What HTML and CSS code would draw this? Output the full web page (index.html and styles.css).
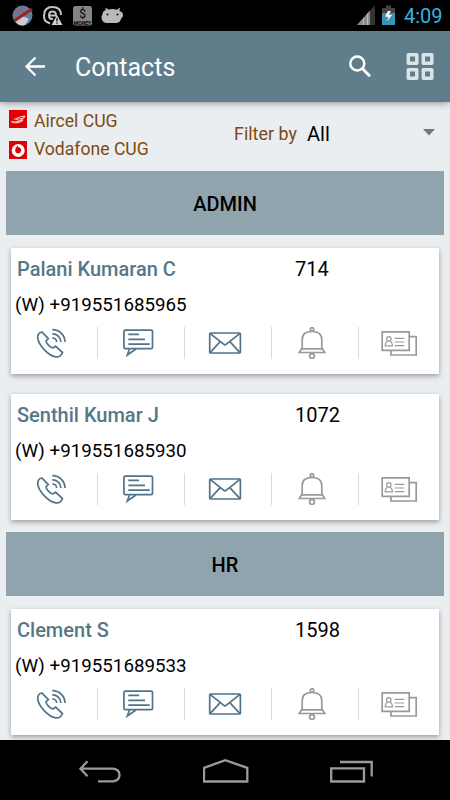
FILE: index.html
```html
<!DOCTYPE html>
<html lang="en">
<head>
  <meta charset="UTF-8">
  <meta name="viewport" content="width=device-width, initial-scale=1.0">
  <title>Contacts</title>
  <link rel="stylesheet" href="styles.css">
</head>
<body>
  <!-- Shared icons -->
  <svg class="icon-defs">
    <symbol id="call" viewBox="0 0 48 32">
      <path d="M14.8 5C12.500 5.500 10.600 7.500 10.700 10.500C11.200 18 21.500 29 28.800 29.900C32 30.200 34.500 28.300 35.500 25.500L28.600 19.200L26.100 21C23.600 20.900 19 16.600 19 13.800L21.300 11.600Z"/>
      <path d="M25.300 2.700A12.500 12.500 0 0 1 38 15M25.300 6.900A8.300 8.300 0 0 1 33.900 15M25.300 11A4.400 4.400 0 0 1 29.700 15"/>
    </symbol>
    <symbol id="message" viewBox="0 0 48 32">
      <rect x="9.900" y="3.100" width="28.600" height="18.600" rx="1.500"/>
      <path d="M15.500 22L13.300 28L22 22M14.300 7.400H25M14.300 12.400H31M14.300 17.200H35.700"/>
    </symbol>
    <symbol id="mail" viewBox="0 0 48 32">
      <rect x="8.700" y="6" width="30.700" height="20" rx="1"/>
      <path d="M9 6.300L22.600 17.200Q24 18.400 25.400 17.200L39 6.300M9 25.700L19.200 14.700M39 25.700L28.800 14.700"/>
    </symbol>
    <symbol id="bell" viewBox="0 0 48 32">
      <circle cx="24" cy="2.400" r="1.700"/>
      <path d="M14.200 21.300V12.500Q14.200 4.500 24 4.500T33.800 12.500V21.300M13.500 21.800H34.500L36.700 25.500H11.300Z"/>
      <circle cx="24" cy="29" r="2.400"/>
    </symbol>
    <symbol id="card" viewBox="0 0 48 32">
      <path d="M7.200 4.900H34.200V23.300H7.200ZM34.500 9.700H41.200V28H16V23.600"/>
      <g stroke-width="1.200">
        <circle cx="13.800" cy="11.900" r="2.200"/>
        <path d="M12.600 14.500Q10.300 15 10.200 18.800H17.400Q17.300 15 15 14.500M19.700 11.400H29.300M19.700 15H29.300M19.700 18.600H29.300"/>
      </g>
    </symbol>
  </svg>

  <div class="phone">
    <!-- Status Bar -->
    <div class="status-bar">
      <svg width="128" height="31" viewBox="0 0 128 31">
        <circle cx="22.500" cy="15.500" r="10" fill="#5b7f9c"/>
        <path d="M15 21q6-8 14-2l-4 6q-6 2-10-4z" fill="#c6ced1"/>
        <path d="M22 7v6M15 10l4 3" stroke="#a85b62" stroke-width="2"/>
        <path d="M14 21L32 9" stroke="#a41f20" stroke-width="3"/>
        <path d="M50 23.500L46 21.500Q44 20 44 15.500Q44 7 52.500 7T61 15" fill="none" stroke="#c4c4c4" stroke-width="2"/>
        <path d="M49 15.500H56Q56 11.500 52.500 11.500T49 15.500T53 19" fill="none" stroke="#c4c4c4" stroke-width="2"/>
        <path d="M57 15L62.500 25H51.500Z" fill="#d0d0d0"/>
        <path d="M57 18v3.500M57 22.500v1.300" stroke="#111" stroke-width="1.300"/>
        <rect x="73" y="6" width="19" height="19.500" rx="2.500" fill="#858585"/>
        <text x="82.500" y="18" class="money-sign">$</text>
        <text x="82.500" y="24.500" class="money-label">MONEY</text>
        <path d="M102 20Q101 16 102.500 14Q103 10.500 106 10L105 7.500L108.500 9.500Q113 8.300 117 9.700L120 7.500L119.500 11Q123.500 12 123 16L121 19Q120 23 116 23H107Q103.500 23 102 20Z" fill="#b9b9b9"/>
        <circle cx="107.500" cy="14.500" r="1" fill="#111"/>
        <circle cx="117.500" cy="14.500" r="1" fill="#111"/>
      </svg>
      <div class="status-right">
        <svg width="40" height="31" viewBox="0 0 40 31">
          <path d="M2 25L20 5V25Z" fill="#343434"/>
          <path d="M2 25L15 10.500V25Z" fill="#8d8d8d"/>
          <path d="M8.500 18V25M12.500 13.500V25" stroke="#bbb"/>
          <path d="M27 8h4V5.500h5V8h4V13H27Z" fill="#444"/>
          <path d="M27 13H40V25H27Z" fill="#3795b8"/>
          <path d="M33 11L30 16.500L33.500 17L32 21.500L37 15L33.500 14.500L36 11Z" fill="#fff"/>
        </svg>
        <span class="clock">4:09</span>
      </div>
    </div>

    <!-- App Bar -->
    <div class="app-bar">
      <svg width="22" height="22" viewBox="0 0 22 22"><path d="M11.500 1.500L2.500 10.500L11.500 19.500M2.500 10.500H21" fill="none" stroke="#fff" stroke-width="2.300"/></svg>
      <h1>Contacts</h1>
      <svg width="24" height="24" viewBox="0 0 24 24"><circle cx="9.300" cy="8.500" r="7" fill="none" stroke="#fff" stroke-width="2.500"/><path d="M14.300 13.500L22 21.200" stroke="#fff" stroke-width="3"/></svg>
      <svg class="grid-icon" width="28" height="28" viewBox="0 0 28 28">
        <path d="M2.300 1.800h8.500v8.500H2.300ZM17.300 1.800h8.500v8.500H17.300ZM2.300 16.800h8.500v8.500H2.300ZM17.300 16.800h8.500v8.500H17.300Z" fill="none" stroke="#dce3e6" stroke-width="3.500" stroke-linejoin="round"/>
      </svg>
    </div>

    <!-- Filter Row -->
    <div class="filters">
      <div class="operators">
        <div class="operator">
          <svg width="18" height="18" viewBox="0 0 18 18"><rect width="18" height="18" fill="#e00006"/><path d="M2 11.500Q6 12.500 9 11Q14 10.500 16 6M5 9.500Q9 7 16 6M7 9.500L15 8M3 12.500Q10 13.500 14 10" fill="none" stroke="#f8b6b8" stroke-width="1.200"/></svg>
          <span>Aircel CUG</span>
        </div>
        <div class="operator">
          <svg width="18" height="18" viewBox="0 0 18 18"><rect width="18" height="18" fill="#e00006"/><circle cx="9.200" cy="9.500" r="6.500" fill="#fff"/><path d="M10.500 3.500Q8.500 4 9 6Q12.500 7 12.200 9.800Q11.500 12.500 9 12.500Q6 12 6.200 9Q7 5 10.500 3.500Z" fill="#e00006"/></svg>
          <span>Vodafone CUG</span>
        </div>
      </div>
      <span class="filter-label">Filter by</span>
      <span class="filter-value">All</span>
      <svg width="12" height="7" viewBox="0 0 12 7"><path d="M0 0H12L6 6.500Z" fill="#747777"/></svg>
    </div>

    <!-- Contact List -->
    <div class="list">
      <h2>ADMIN</h2>

      <div class="contact">
        <div class="contact-head"><span class="name">Palani Kumaran C</span><span class="ext">714</span></div>
        <div class="number">(W) +919551685965</div>
        <div class="actions">
          <div class="action"><svg><use href="#call"/></svg></div>
          <div class="action"><svg><use href="#message"/></svg></div>
          <div class="action"><svg><use href="#mail"/></svg></div>
          <div class="action off"><svg><use href="#bell"/></svg></div>
          <div class="action off"><svg><use href="#card"/></svg></div>
        </div>
      </div>

      <div class="contact">
        <div class="contact-head"><span class="name">Senthil Kumar J</span><span class="ext">1072</span></div>
        <div class="number">(W) +919551685930</div>
        <div class="actions">
          <div class="action"><svg><use href="#call"/></svg></div>
          <div class="action"><svg><use href="#message"/></svg></div>
          <div class="action"><svg><use href="#mail"/></svg></div>
          <div class="action off"><svg><use href="#bell"/></svg></div>
          <div class="action off"><svg><use href="#card"/></svg></div>
        </div>
      </div>

      <h2>HR</h2>

      <div class="contact">
        <div class="contact-head"><span class="name">Clement S</span><span class="ext">1598</span></div>
        <div class="number">(W) +919551689533</div>
        <div class="actions">
          <div class="action"><svg><use href="#call"/></svg></div>
          <div class="action"><svg><use href="#message"/></svg></div>
          <div class="action"><svg><use href="#mail"/></svg></div>
          <div class="action off"><svg><use href="#bell"/></svg></div>
          <div class="action off"><svg><use href="#card"/></svg></div>
        </div>
      </div>
    </div>

    <!-- Navigation Bar -->
    <div class="nav-bar">
      <svg viewBox="0 0 48 32"><path d="M11.500 6.300L4.500 13.700L11.500 21.200M4.500 13.700H37Q43.500 14.500 43.500 20T37 26.300H22"/></svg>
      <svg viewBox="0 0 48 32"><path d="M1 26.500V12.800L22.300 5.200L44.300 12.800V26.500Z"/></svg>
      <svg viewBox="0 0 48 32"><path d="M2.200 13.400H35V26.500H2.200ZM11 7H42.700V21.500"/></svg>
    </div>
  </div>
</body>
</html>
```

FILE: styles.css
```css
* {
  box-sizing: border-box;
}
body {
  margin: 0;
  font-family: Roboto, "Liberation Sans", sans-serif;
  background-color: #ebeef1;
  color: #000;
}
svg {
  display: block;
  flex: none;
}
.icon-defs {
  display: none;
}
.phone {
  display: flex;
  flex-direction: column;
  width: 450px;
  height: 800px;
  overflow: hidden;
}
.status-bar {
  display: flex;
  flex: none;
  justify-content: space-between;
  height: 31px;
  padding-right: 8px;
  background-color: #000;
}
.money-sign {
  font-size: 12px;
  text-anchor: middle;
}
.money-label {
  font-size: 5px;
  font-weight: bold;
  text-anchor: middle;
}
.status-right {
  display: flex;
  gap: 9px;
}
.clock {
  width: 38px;
  font-size: 20px;
  line-height: 33px;
  color: #33b5e5;
  white-space: nowrap;
}
.app-bar {
  display: flex;
  flex: none;
  align-items: center;
  height: 71px;
  padding: 0 16px 0 24px;
  background-color: #607d8b;
  box-shadow: 0 1px 7px rgba(0, 0, 0, 0.4);
}
.app-bar h1 {
  flex: 1;
  margin: 2px 0 0 29px;
  font-size: 25px;
  font-weight: 400;
  color: #fff;
}
.grid-icon {
  margin-left: 34px;
}
.filters {
  display: flex;
  flex: none;
  height: 69.300px;
  padding-left: 9px;
  font-size: 17.900px;
  color: #7c4a12;
}
.operators {
  width: 225px;
  padding-top: 5px;
  font-size: 17.600px;
}
.operator {
  display: flex;
  align-items: flex-start;
  gap: 7px;
  height: 28px;
  line-height: 29px;
}
.operator svg {
  margin-top: 3px;
}
.operator + .operator svg {
  margin-top: 6px;
}
.filter-label {
  width: 73px;
  line-height: 64px;
}
.filter-value {
  width: 116px;
  font-size: 20px;
  line-height: 64px;
  color: #000;
}
.filters > svg {
  margin-top: 27px;
}
.list {
  flex: 1;
  overflow: hidden;
}
.list h2 {
  height: 64.200px;
  margin: 0 6px 12.300px;
  font-size: 20px;
  font-weight: 500;
  line-height: 66px;
  text-align: center;
  background-color: #90a4ae;
}
.contact {
  height: 126px;
  margin: 0 11px 20px;
  background-color: #fff;
  box-shadow: 0 2px 5px rgba(0, 0, 0, 0.35);
}
.contact + h2 {
  margin-top: -7.700px;
}
.contact-head {
  display: flex;
  padding-left: 6px;
  font-size: 20px;
  line-height: 42px;
}
.name {
  width: 278px;
  font-weight: 500;
  color: #557888;
}
.number {
  padding-left: 4px;
  font-size: 18.750px;
  line-height: 31px;
}
.actions {
  display: flex;
  height: 32px;
  margin-top: 6px;
}
.action {
  display: flex;
  flex: none;
  justify-content: center;
  width: 87px;
  padding-right: 6px;
  border-right: 1px solid #d9d9d9;
}
.action:last-child {
  width: 80px;
  padding-right: 0;
  border-right: none;
}
.action svg {
  width: 48px;
  height: 32px;
  fill: none;
  stroke: #4f7487;
  stroke-width: 1.700;
}
.action.off svg {
  stroke: #999;
}
.nav-bar {
  display: flex;
  flex: none;
  justify-content: space-between;
  height: 60px;
  padding: 15px 73px 0 76px;
  background-color: #000;
}
.nav-bar svg {
  width: 48px;
  height: 32px;
  fill: none;
  stroke: #9b9b9b;
  stroke-width: 2.300;
}
```
